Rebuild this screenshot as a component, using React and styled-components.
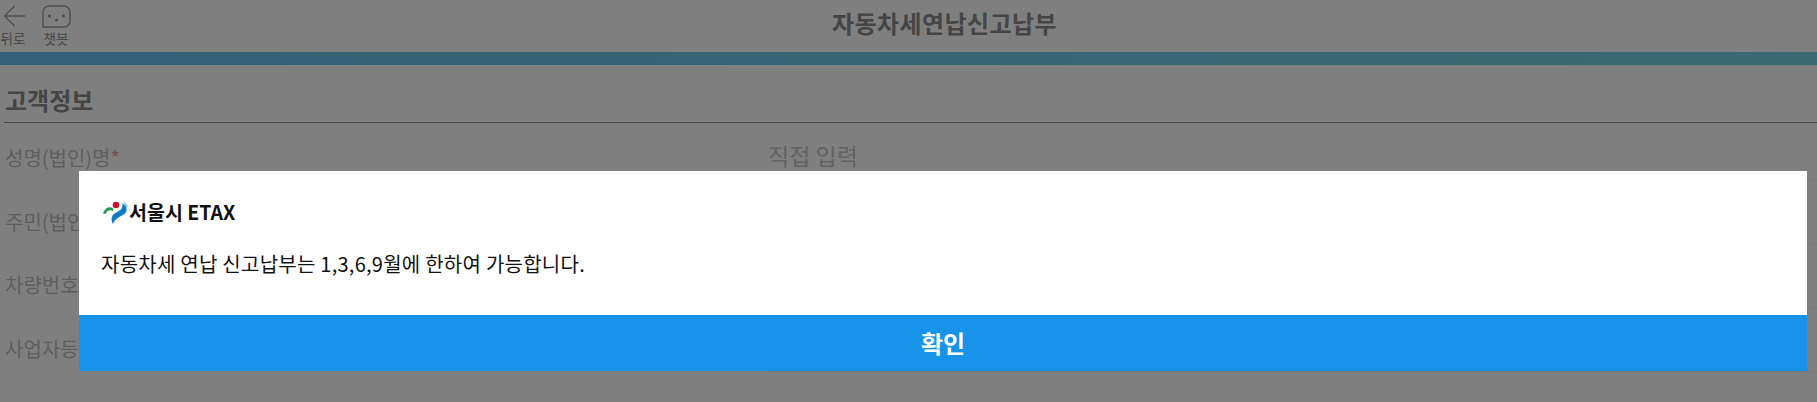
import React from "react";
import styled, { createGlobalStyle } from "styled-components";

const Global = createGlobalStyle`
  html, body { margin: 0; padding: 0; height: 100%; }
  body {
    background: #fff;
    font-family: "Noto Sans CJK KR", "Noto Sans", sans-serif;
    overflow: hidden;
  }
`;

const rows = [
  { label: "성명(법인)명", required: true, value: "직접 입력" },
  { label: "주민(법인)번호" },
  { label: "차량번호" },
  { label: "사업자등록번호" },
];

const BackIcon = () => (
  <svg width="23" height="22" viewBox="0 0 23 22" fill="none" stroke="#9c9c9c" strokeWidth="1.3">
    <path d="M23 11H3M12.500 1L2.500 11l10 10" />
  </svg>
);

const BotIcon = () => (
  <svg width="29" height="23" viewBox="0 0 29 23" fill="none">
    <path d="M7 1h15a6 6 0 0 1 6 6v9a6 6 0 0 1-6 6H1V7a6 6 0 0 1 6-6z" stroke="#a0a0a0" strokeWidth="1.5" />
    <circle cx="7.500" cy="11" r="1.500" fill="#969696" />
    <circle cx="14.500" cy="15" r="1.500" fill="#969696" />
    <circle cx="21.500" cy="11" r="1.500" fill="#969696" />
  </svg>
);

const SeoulLogo = () => (
  <svg width="26" height="24" viewBox="0 0 26 24">
    <circle cx="13" cy="5" r="3.300" fill="#c8102e" />
    <path d="M0 13.500C1.500 8.500 6 5.500 10 8.500L10 11C7 9.500 4 10.500 2.500 14z" fill="#1f9a4a" />
    <path d="M10 24C7 19 9 14 14 12C18 10.500 20 7.500 19.500 3C25 7 25 12 20 15C16 17 12 19 10 24z" fill="#0f7cc4" />
    <path d="M20 0.500L25 6L23.500 8C22.500 5.500 21 3.500 20 0.500z" fill="#7cc4ec" />
  </svg>
);

export default function App() {
  return (
    <>
      <Global />
      <Page>
        <Header>
          <HeaderTools>
            <Tool $width={26}>
              <IconSlot>
                <BackIcon />
              </IconSlot>
              <ToolLabel>뒤로</ToolLabel>
            </Tool>
            <Tool $width={30}>
              <IconSlot>
                <BotIcon />
              </IconSlot>
              <ToolLabel>챗봇</ToolLabel>
            </Tool>
          </HeaderTools>
          <Title>자동차세연납신고납부</Title>
        </Header>
        <Band />
        <Section>
          <SectionTitle>고객정보</SectionTitle>
          {rows.map((row) => (
            <Row key={row.label}>
              <RowLabel>
                {row.label}
                {row.required && <Star>*</Star>}
              </RowLabel>
              <RowValue>{row.value}</RowValue>
            </Row>
          ))}
        </Section>
        <Overlay />
        <Dialog>
          <DialogBody>
            <Brand>
              <SeoulLogo />
              <BrandName>서울시 ETAX</BrandName>
            </Brand>
            <Message>자동차세 연납 신고납부는 1,3,6,9월에 한하여 가능합니다.</Message>
          </DialogBody>
          <ConfirmButton>확인</ConfirmButton>
        </Dialog>
      </Page>
    </>
  );
}

const Page = styled.div`
  position: relative;
  width: 1817px;
  height: 402px;
  overflow: hidden;
  background: #fff;
`;

const Header = styled.header`
  height: 52px;
  display: flex;
  align-items: flex-start;
`;

const HeaderTools = styled.div`
  display: flex;
  gap: 15px;
  padding: 4px 1px 0 0;
`;

const Tool = styled.div`
  width: ${(p) => p.$width}px;
  display: flex;
  flex-direction: column;
  align-items: center;
`;

const IconSlot = styled.div`
  height: 24px;
  display: flex;
  align-items: center;
`;

const ToolLabel = styled.span`
  font-size: 13.500px;
  line-height: 16px;
  margin-top: 2px;
  color: #909090;
  white-space: nowrap;
`;

const Title = styled.h1`
  flex: 1;
  margin: 0;
  text-align: center;
  font-size: 24px;
  line-height: 46px;
  letter-spacing: 0.400px;
  font-weight: 700;
  color: #8a8a8a;
`;

const Band = styled.div`
  height: 13px;
  background: linear-gradient(90deg, #6cc0f4, #74d4e4);
`;

const Section = styled.section`
  padding-left: 4px;
`;

const SectionTitle = styled.h2`
  box-sizing: border-box;
  margin: 0;
  height: 58px;
  padding: 13px 0 0 1px;
  line-height: 43px;
  font-size: 24px;
  font-weight: 700;
  color: #8a8a8a;
  border-bottom: 1px solid #8c8c8c;
`;

const Row = styled.div`
  box-sizing: border-box;
  display: grid;
  grid-template-columns: 764px 1fr;
  height: 63.670px;

  &:first-of-type {
    height: 58px;
  }
`;

const RowLabel = styled.div`
  align-self: end;
  padding: 0 0 9px 1px;
  font-size: 20px;
  line-height: 28px;
  color: #bcbcbc;
  white-space: nowrap;
`;

const Star = styled.span`
  color: #e99;
`;

const RowValue = styled.div`
  box-sizing: border-box;
  display: flex;
  align-items: flex-end;
  padding-bottom: 11px;
  font-size: 23px;
  line-height: 28px;
  color: #c4c4c4;
  border-bottom: 1px solid #f0f0f0;
`;

const Overlay = styled.div`
  position: absolute;
  inset: 0;
  background: rgba(0, 0, 0, 0.5);
`;

const Dialog = styled.div`
  position: absolute;
  left: 79px;
  top: 171px;
  width: 1728px;
  height: 200px;
  display: flex;
  flex-direction: column;
  background: #fff;
`;

const DialogBody = styled.div`
  flex: 1;
  padding: 29px 24px 0;
`;

const Brand = styled.div`
  display: flex;
  align-items: center;
  height: 24px;
`;

const BrandName = styled.span`
  margin-top: -2px;
  font-size: 19.500px;
  font-weight: 700;
  color: #111;
`;

const Message = styled.p`
  margin: 26px 0 0 -2px;
  font-size: 20px;
  line-height: 28px;
  letter-spacing: 0.250px;
  color: #111;
`;

const ConfirmButton = styled.button`
  height: 56px;
  border: 0;
  padding: 0 0 2px;
  background: #1793e9;
  color: #fff;
  font-family: inherit;
  font-size: 24px;
  font-weight: 700;
`;
